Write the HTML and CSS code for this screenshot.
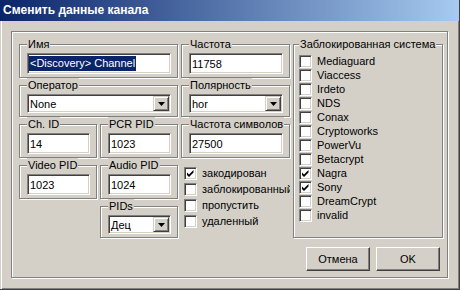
FILE: index.html
```html
<!DOCTYPE html>
<html lang="ru">
<head>
  <meta charset="UTF-8">
  <title>Сменить данные канала</title>
  <link rel="stylesheet" href="styles.css">
</head>
<body>
  <div class="window">
    <div class="titlebar">Сменить данные канала</div>
    <div class="client">
      <div class="frame">
        <div class="panes">
          <div class="fields">
            <fieldset class="group wide">
              <legend>Имя</legend>
              <div class="edit"><span class="selected">&lt;Discovery&gt; Channel</span></div>
            </fieldset>
            <fieldset class="group">
              <legend>Частота</legend>
              <div class="edit">11758</div>
            </fieldset>

            <fieldset class="group wide">
              <legend>Оператор</legend>
              <div class="combo">
                <span>None</span>
                <span class="drop"><svg width="7" height="4" viewBox="0 0 7 4"><polygon points="0,0 7,0 3.5,4" fill="#000"/></svg></span>
              </div>
            </fieldset>
            <fieldset class="group">
              <legend>Полярность</legend>
              <div class="combo">
                <span>hor</span>
                <span class="drop"><svg width="7" height="4" viewBox="0 0 7 4"><polygon points="0,0 7,0 3.5,4" fill="#000"/></svg></span>
              </div>
            </fieldset>

            <fieldset class="group">
              <legend>Ch. ID</legend>
              <div class="edit">14</div>
            </fieldset>
            <fieldset class="group">
              <legend>PCR PID</legend>
              <div class="edit">1023</div>
            </fieldset>
            <fieldset class="group">
              <legend>Частота символов</legend>
              <div class="edit">27500</div>
            </fieldset>

            <fieldset class="group">
              <legend>Video PID</legend>
              <div class="edit">1023</div>
            </fieldset>
            <fieldset class="group">
              <legend>Audio PID</legend>
              <div class="edit">1024</div>
            </fieldset>

            <div class="flags">
              <div class="check"><span class="box"><svg width="9" height="9" viewBox="0 0 9 9"><path d="M1 3.5 L3 5.5 L7.5 1 L7.5 3.5 L3 8 L1 6 Z" fill="#000"/></svg></span>закодирован</div>
              <div class="check"><span class="box"></span>заблокированный</div>
              <div class="check"><span class="box"></span>пропустить</div>
              <div class="check"><span class="box"></span>удаленный</div>
            </div>

            <fieldset class="group pids">
              <legend>PIDs</legend>
              <div class="combo">
                <span>Дец</span>
                <span class="drop"><svg width="7" height="4" viewBox="0 0 7 4"><polygon points="0,0 7,0 3.5,4" fill="#000"/></svg></span>
              </div>
            </fieldset>
          </div>

          <fieldset class="group systems">
            <legend>Заблокированная система</legend>
            <div class="check"><span class="box"></span>Mediaguard</div>
            <div class="check"><span class="box"></span>Viaccess</div>
            <div class="check"><span class="box"></span>Irdeto</div>
            <div class="check"><span class="box"></span>NDS</div>
            <div class="check"><span class="box"></span>Conax</div>
            <div class="check"><span class="box"></span>Cryptoworks</div>
            <div class="check"><span class="box"></span>PowerVu</div>
            <div class="check"><span class="box"></span>Betacrypt</div>
            <div class="check"><span class="box"><svg width="9" height="9" viewBox="0 0 9 9"><path d="M1 3.5 L3 5.5 L7.5 1 L7.5 3.5 L3 8 L1 6 Z" fill="#000"/></svg></span>Nagra</div>
            <div class="check"><span class="box"><svg width="9" height="9" viewBox="0 0 9 9"><path d="M1 3.5 L3 5.5 L7.5 1 L7.5 3.5 L3 8 L1 6 Z" fill="#000"/></svg></span>Sony</div>
            <div class="check"><span class="box"></span>DreamCrypt</div>
            <div class="check"><span class="box"></span>invalid</div>
          </fieldset>
        </div>

        <div class="buttons">
          <button>Отмена</button>
          <button>OK</button>
        </div>
      </div>
    </div>
  </div>
</body>
</html>
```

FILE: styles.css
```css
body {
  margin: 0;
  font-family: "Liberation Sans", Arial, sans-serif;
  font-size: 11px;
  color: #000;
}

.window {
  width: 460px;
  height: 290px;
  box-sizing: border-box;
  display: flex;
  flex-direction: column;
  background-color: #d4d0c8;
  border-right: 1px solid #404040;
  border-bottom: 1px solid #404040;
  box-shadow: inset -1px -1px 0 #808080;
}

.titlebar {
  height: 21px;
  line-height: 21px;
  padding-left: 3px;
  color: #fff;
  font-weight: bold;
  font-size: 12px;
  background: linear-gradient(to right, #0a246a, #a6caf0);
}

.client {
  flex: 1;
  display: flex;
  padding: 10px 11px 11px 10px;
  border-left: 1px solid #d4d0c8;
  box-shadow: inset 1px 0 0 #fff;
}

.frame {
  flex: 1;
  display: flex;
  flex-direction: column;
  padding: 5px 4px 0 7px;
  border: 1px solid #808080;
  box-shadow: inset 1px 1px 0 #fff, 1px 1px 0 #fff;
}

.panes {
  display: flex;
  gap: 3px;
}

.fields {
  display: grid;
  grid-template-columns: 78px 78px 109px;
  column-gap: 3px;
  align-items: start;
}

/* etched group box */
.group {
  margin: 0;
  min-width: 0;
  padding: 2px 6px 3px 7px;
  border: 1px solid #808080;
  box-shadow: inset 1px 1px 0 #fff, 1px 1px 0 #fff;
}

.group legend {
  padding: 0 1px;
  line-height: 14px;
  background-color: #d4d0c8;
  white-space: nowrap;
}

.wide {
  grid-column: span 2;
}

.pids {
  grid-column: 2;
  grid-row: 5;
}

.edit,
.combo {
  box-sizing: border-box;
  background-color: #fff;
  border: 1px solid;
  border-color: #808080 #fff #fff #808080;
  box-shadow: inset 1px 1px 0 #404040, inset -1px -1px 0 #d4d0c8;
  display: flex;
  align-items: center;
  white-space: nowrap;
  overflow: hidden;
}

.edit {
  height: 21px;
  padding-left: 2px;
}

.selected {
  margin-left: -1px;
  padding: 0 1px;
  line-height: 15px;
  color: #fff;
  background-color: #0a246a;
}

.combo {
  height: 19px;
  padding: 1px 1px 1px 2px;
  justify-content: space-between;
}

.drop {
  box-sizing: border-box;
  width: 16px;
  height: 15px;
  display: flex;
  align-items: center;
  justify-content: center;
  background-color: #d4d0c8;
  border: 1px solid;
  border-color: #d4d0c8 #404040 #404040 #d4d0c8;
  box-shadow: inset 1px 1px 0 #fff, inset -1px -1px 0 #808080;
}

.flags {
  grid-column: 3;
  grid-row: 4 / span 2;
  padding: 8px 0 0 3px;
  overflow: hidden;
}

.flags .check {
  height: 16px;
}

.check {
  display: flex;
  align-items: flex-start;
  gap: 5px;
  height: 14px;
  line-height: 15px;
  white-space: nowrap;
}

.box {
  box-sizing: border-box;
  flex: none;
  width: 13px;
  height: 13px;
  margin-top: 1px;
  display: flex;
  align-items: center;
  justify-content: center;
  background-color: #fff;
  border: 1px solid;
  border-color: #808080 #fff #fff #808080;
  box-shadow: inset 1px 1px 0 #404040, inset -1px -1px 0 #d4d0c8;
}

.systems {
  flex: 1;
  padding: 3px 4px 0 5px;
}

.buttons {
  display: flex;
  justify-content: flex-end;
  gap: 6px;
  margin-top: 9px;
  padding-right: 3px;
}

button {
  width: 64px;
  height: 24px;
  padding: 0;
  font: inherit;
  color: #000;
  background-color: #d4d0c8;
  border: 1px solid;
  border-color: #fff #404040 #404040 #fff;
  box-shadow: inset -1px -1px 0 #808080;
}
```
